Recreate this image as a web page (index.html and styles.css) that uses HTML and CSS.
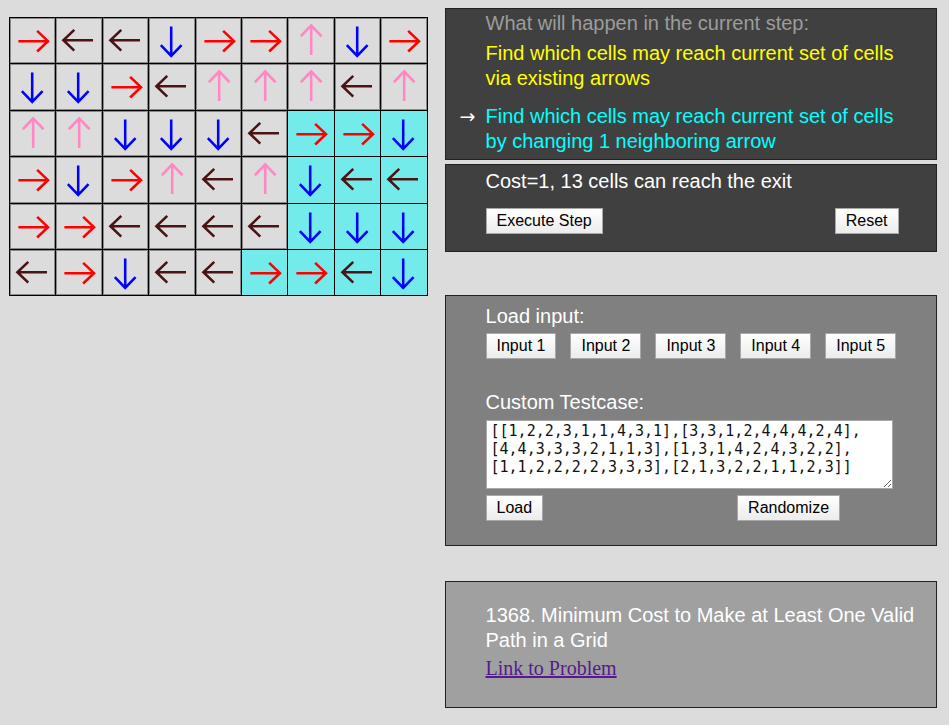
FILE: index.html
```html
<html>
	<head>
		<title>Minimum Cost to Make at Least One Valid Path</title>
		<link rel="stylesheet" href="styles.css">
	</head>
	<body>
		<svg class="defs" width="0" height="0">
			<!-- one arrow pointing right, rotated for the other directions -->
			<symbol id="arrow" viewBox="0 0 46 46">
				<path d="M8.5 23.5 H38.5 M27.5 13 L38.5 23.5 L27.5 34" fill="none" stroke="currentColor" stroke-width="2.6"/>
			</symbol>
		</svg>
		<div class="board" id="board"></div>
		<div class="side">
			<div class="panel dark">
				<div class="caption">What will happen in the current step:</div>
				<div class="step yellow"><span class="mark"></span><span>Find which cells may reach current set of cells<br>via existing arrows</span></div>
				<div class="step cyan"><span class="mark">&rarr;</span><span>Find which cells may reach current set of cells<br>by changing 1 neighboring arrow</span></div>
			</div>
			<div class="panel dark status">
				<div class="line">Cost=1, 13 cells can reach the exit</div>
				<div class="buttons spread">
					<button>Execute Step</button>
					<button>Reset</button>
				</div>
			</div>
			<div class="panel mid inputs">
				<div class="line">Load input:</div>
				<div class="buttons">
					<button>Input 1</button>
					<button>Input 2</button>
					<button>Input 3</button>
					<button>Input 4</button>
					<button>Input 5</button>
				</div>
				<div class="line custom">Custom Testcase:</div>
				<textarea id="testcase">[[1,2,2,3,1,1,4,3,1],[3,3,1,2,4,4,4,2,4],[4,4,3,3,3,2,1,1,3],[1,3,1,4,2,4,3,2,2],[1,1,2,2,2,2,3,3,3],[2,1,3,2,2,1,1,2,3]]</textarea>
				<div class="buttons">
					<button>Load</button>
					<button class="randomize">Randomize</button>
				</div>
			</div>
			<div class="panel light problem">
				<div class="line">1368. Minimum Cost to Make at Least One Valid Path in a Grid</div>
				<a href="#">Link to Problem</a>
			</div>
		</div>
		<script>
			// 1 = right, 2 = left, 3 = down, 4 = up
			var arrows = {1: ["right", 0], 2: ["left", 180], 3: ["down", 90], 4: ["up", 270]};
			var grid = JSON.parse(document.getElementById("testcase").value);
			// cells that can already reach the bottom-right exit
			var reached = ["2,6","2,7","2,8","3,6","3,7","3,8","4,6","4,7","4,8","5,5","5,6","5,7","5,8"];

			var board = document.getElementById("board");
			var html = "";
			for (var r = 0; r < grid.length; r++) {
				for (var c = 0; c < grid[r].length; c++) {
					var a = arrows[grid[r][c]];
					var cls = "cell " + a[0];
					if (reached.indexOf(r + "," + c) >= 0) cls += " reached";
					html += '<div class="' + cls + '"><svg viewBox="0 0 46 46" style="transform: rotate(' + a[1] + 'deg)"><use href="#arrow"/></svg></div>';
				}
			}
			board.innerHTML = html;
		</script>
	</body>
</html>
```

FILE: styles.css
```css
body{
	margin: 0;
	padding: 8px;
	background-color: #dcdcdc;
	font-family: "Liberation Sans", Arial, sans-serif;
	font-size: 20px;
	display: flex;
	align-items: flex-start;
}
svg.defs{
	position: absolute;
}

/* arrow grid */
div.board{
	margin: 9px 0 0 1px;
	display: grid;
	grid-template-columns: repeat(9, 45.4px);
	grid-auto-rows: 45.4px;
	gap: 1px;
	padding: 1px;
	background-color: black;
}
div.cell{
	background-color: #dcdcdc;
	box-shadow: inset 0 0 0 1px #8a8a8a;
}
div.cell svg{
	display: block;
	width: 100%;
	height: 100%;
}
div.cell.reached{
	background-color: #73ebeb;
	box-shadow: none;
}
div.right{ color: #ff0000; }
div.left{ color: #4a1414; }
div.down{ color: #0000ff; }
div.up{ color: #ff88c4; }

/* right hand column */
div.side{
	margin-left: 17px;
	width: 492px;
}
div.panel{
	border: 1px solid #222222;
	padding: 2px 20px 5px 40px;
	color: white;
	line-height: 25px;
}
div.dark{
	background-color: #404040;
}
div.mid{
	background-color: #808080;
}
div.light{
	background-color: #a0a0a0;
}
div.caption{
	color: #9c9c9c;
}
div.step{
	display: flex;
	margin-top: 5px;
	margin-left: -26px;
}
div.step + div.step{
	margin-top: 13px;
}
span.mark{
	width: 26px;
	flex: none;
	color: white;
	font-family: "DejaVu Sans", sans-serif;
	font-size: 19px;
}
div.yellow{ color: #ffff00; }
div.cyan{ color: #00ffff; }

div.status{
	margin-top: 4px;
	padding: 4px 37px 17px 40px;
}
div.status div.buttons{
	margin-top: 14px;
}
div.buttons{
	display: flex;
	gap: 14px;
}
div.spread{
	justify-content: space-between;
}
button{
	flex: none;
	white-space: nowrap;
	font-family: inherit;
	font-size: 16px;
	height: 26px;
	padding: 0 10px;
	color: black;
	background: linear-gradient(#ffffff, #ececec);
	border: 1px solid #a8a8a8;
	border-radius: 0;
}

div.inputs{
	margin-top: 43px;
	padding: 8px 40px 24px 40px;
}
div.inputs div.buttons{
	margin-top: 4px;
}
div.custom{
	margin-top: 31px;
}
textarea{
	display: block;
	box-sizing: border-box;
	width: 407px;
	height: 69px;
	margin: 5px 0 6px 0;
	padding: 1px 4px;
	border: 1px solid #a8a8a8;
	font-family: "DejaVu Sans Mono", monospace;
	font-size: 15px;
	line-height: 18px;
	color: #111111;
}
button.randomize{
	margin-left: 180px;
}

div.problem{
	margin-top: 35px;
	padding: 21px 20px 26px 40px;
}
div.problem a{
	display: block;
	margin-top: 3px;
	font-family: "Liberation Serif", "Times New Roman", serif;
	font-size: 20px;
	color: #551a8b;
}
```
